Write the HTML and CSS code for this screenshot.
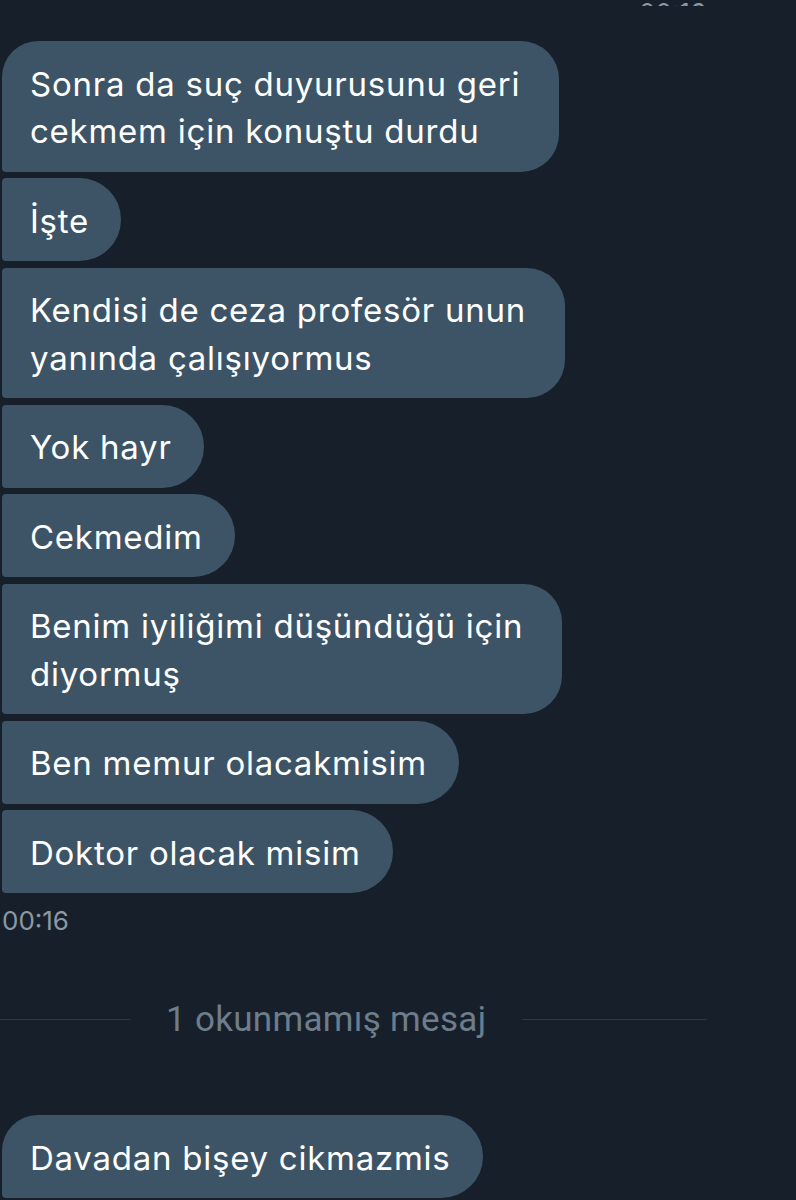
FILE: index.html
```html
<!DOCTYPE html>
<html lang="tr">
<head>
<meta charset="utf-8">
<link rel="stylesheet" href="styles.css">
</head>
<body>
<div class="top-stamp"><span class="stamp-text">00:16</span><span class="check">✓</span></div>
<div class="group">
  <div class="bubble first wide">Sonra da suç duyurusunu geri<br>cekmem için konuştu durdu</div>
  <div class="bubble">İşte</div>
  <div class="bubble wide">Kendisi de ceza profesör unun<br>yanında çalışıyormus</div>
  <div class="bubble">Yok hayr</div>
  <div class="bubble">Cekmedim</div>
  <div class="bubble wide">Benim iyiliğimi düşündüğü için<br>diyormuş</div>
  <div class="bubble">Ben memur olacakmisim</div>
  <div class="bubble">Doktor olacak misim</div>
</div>
<div class="time">00:16</div>
<div class="divider"><span class="line left"></span><span class="divider-text">1 okunmamış mesaj</span><span class="line right"></span></div>
<div class="group last-group">
  <div class="bubble first">Davadan bişey cikmazmis</div>
</div>
</body>
</html>
```
FILE: styles.css
```css
html, body {
  margin: 0;
  padding: 0;
  background: #17202a;
  height: 1200px;
  overflow: hidden;
}
body {
  font-family: Inter, "Liberation Sans", sans-serif;
  color: #ffffff;
}
.top-stamp {
  height: 6px;
  overflow: hidden;
  display: flex;
  justify-content: flex-end;
  align-items: flex-end;
  padding-right: 62px;
  gap: 12px;
  font-size: 26px;
  color: #8b98a5;
}
.top-stamp .stamp-text, .top-stamp .check {
  line-height: 26px;
  margin-bottom: -20px;
}
.top-stamp .check {
  color: #1d9bf0;
  font-size: 18px;
}
.group {
  display: flex;
  flex-direction: column;
  align-items: flex-start;
  gap: 6.5px;
  margin-top: 35px;
  padding-left: 2px;
}
.bubble {
  background: #3d5466;
  font-size: 33px;
  line-height: 47.5px;
  padding: 19.5px 32px 16px 28px;
  border-radius: 4px 42px 42px 4px;
  letter-spacing: 0.75px;
}
.bubble.wide {
  padding-right: 39px;
  border-top-right-radius: 38px;
  border-bottom-right-radius: 38px;
}
.bubble.first {
  border-top-left-radius: 36px;
}
.time {
  margin-top: 12px;
  padding-left: 2px;
  font-size: 26px;
  line-height: 32px;
  color: #8b98a5;
}
.divider {
  display: flex;
  align-items: center;
  margin-top: 57px;
  height: 50px;
}
.line {
  height: 1px;
  background: #2e3945;
}
.line.left { width: 130px; }
.line.right { width: 185px; }
.divider-text {
  margin: 0 36px;
  font-size: 35px;
  color: #6e7d8b;
  letter-spacing: 0.3px;
  font-family: "Roboto", "Liberation Sans", sans-serif;
}
.last-group {
  margin-top: 71px;
}
```
